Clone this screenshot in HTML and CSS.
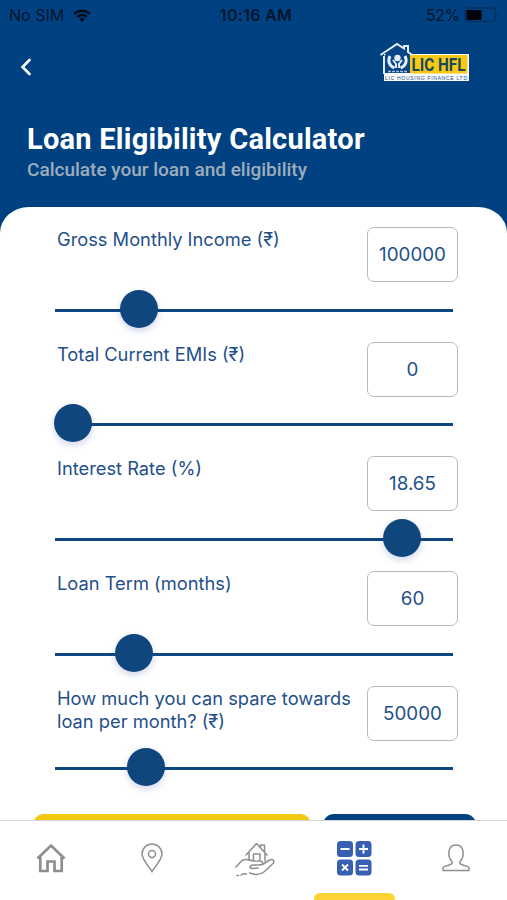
FILE: index.html
```html
<!DOCTYPE html>
<html lang="en">
  <head>
    <meta charset="UTF-8" />
    <meta name="viewport" content="width=device-width, initial-scale=1.0" />
    <title>Loan Eligibility Calculator</title>
    <link rel="stylesheet" href="styles.css" />
  </head>
  <body>
    <div class="status-bar">
      <div class="network">
        <span class="carrier">No SIM</span>
        <svg class="wifi" viewBox="0 0 18 13" width="18" height="13">
          <path d="M9 13 6.3 10.2a3.8 3.8 0 0 1 5.4 0z" fill="#030d1c" />
          <path d="M4.2 8a6.8 6.8 0 0 1 9.6 0M1.1 4.9a11.2 11.2 0 0 1 15.8 0" fill="none" stroke="#030d1c" stroke-width="2.5" />
        </svg>
      </div>
      <span class="clock">10:16 AM</span>
      <div class="power">
        <span class="percent">52%</span>
        <svg class="battery" viewBox="0 0 36 16" width="36" height="16">
          <rect x="1" y="1" width="30.500" height="13.500" rx="3.500" fill="none" stroke="#06305f" stroke-width="1.500" />
          <rect x="2.500" y="3" width="15" height="10" rx="1" fill="#000309" />
          <path d="M33.200 5.500c2.200.8 2.200 3.700 0 4.500z" fill="#06305f" />
        </svg>
      </div>
    </div>

    <header class="header">
      <div class="top-row">
        <svg class="back" viewBox="0 0 12 18" width="12" height="18">
          <path d="M9.500 2 2.500 9l7 7" />
        </svg>
        <svg class="logo" viewBox="0 0 90 40" width="90" height="40">
          <path d="M5 12h85v27H5z" fill="#f7fbff" />
          <path d="M5 14v17h26V10L18 2z" fill="#084586" />
          <path d="M5 32V14M1.500 13 18 2l7 4.500V4h4v6l5 3.500" fill="none" stroke="#e3eefa" stroke-width="2" />
          <path d="M31 13h57.500v18.500H31z" fill="#fac915" />
          <path d="M11 14c-2.500 5-1 9.500 4.500 12M26 14c2.500 5 1 9.500-4.500 12" fill="none" stroke="#e3eefa" stroke-width="3" />
          <path d="M14 18l3 4v4M23 18l-3 4v4" fill="none" stroke="#e3eefa" stroke-width="2" />
          <circle cx="18.500" cy="16" r="3.200" fill="#e3eefa" />
          <path d="M9 29.500h19" stroke="#9fbcda" stroke-width="1.500" stroke-dasharray="3 1" />
          <text class="logo-name" x="32.500" y="28.800" textLength="54" lengthAdjust="spacingAndGlyphs">LIC HFL</text>
          <text class="logo-sub" x="6" y="37.800" textLength="82">LIC HOUSING FINANCE LTD</text>
        </svg>
      </div>
      <h1>Loan Eligibility Calculator</h1>
      <p>Calculate your loan and eligibility</p>
    </header>

    <main class="sheet">
      <div class="field">
        <label for="income">Gross Monthly Income (₹)</label>
        <input id="income" class="amount" type="text" value="100000" />
        <input class="slider" type="range" min="0" max="100" step="0.1" value="18.2" />
      </div>
      <div class="field">
        <label for="emis">Total Current EMIs (₹)</label>
        <input id="emis" class="amount" type="text" value="0" />
        <input class="slider" type="range" min="0" max="100" step="0.1" value="0" />
      </div>
      <div class="field">
        <label for="rate">Interest Rate (%)</label>
        <input id="rate" class="amount" type="text" value="18.65" />
        <input class="slider" type="range" min="0" max="100" step="0.1" value="91" />
      </div>
      <div class="field">
        <label for="term">Loan Term (months)</label>
        <input id="term" class="amount" type="text" value="60" />
        <input class="slider" type="range" min="0" max="100" step="0.1" value="16.8" />
      </div>
      <div class="field">
        <label for="spare">How much you can spare towards loan per month? (₹)</label>
        <input id="spare" class="amount" type="text" value="50000" />
        <input class="slider" type="range" min="0" max="100" step="0.1" value="20.2" />
      </div>
      <div class="actions">
        <button class="btn yellow"></button>
        <button class="btn blue"></button>
      </div>
    </main>

    <nav class="tabs">
      <a class="tab">
        <svg viewBox="0 0 30 30" width="30" height="30">
          <path d="M1.500 15.500 15 2.500l13.500 13M4.300 14v14h7.200V18.500h7V28h7.200V14" fill="none" stroke="#8e8e8e" stroke-width="2.700" />
        </svg>
      </a>
      <a class="tab">
        <svg viewBox="0 0 24 30" width="24" height="30">
          <path d="M12 28.500C9 23.500 2 16.500 2 11a10 10 0 0 1 20 0c0 5.500-7 12.500-10 17.500z" fill="none" stroke="#8e8e8e" stroke-width="1.500" />
          <circle cx="12" cy="11" r="3.500" fill="none" stroke="#8e8e8e" stroke-width="1.500" />
        </svg>
      </a>
      <a class="tab">
        <svg class="hand" viewBox="0 0 40 36" width="40" height="36">
          <g fill="none" stroke="#8e8e8e" stroke-width="1.500" stroke-linecap="round" stroke-linejoin="round">
            <path d="M11 13 21.500 1.500 32 13M14 11v7M30 11v8M25.500 5V3h4v7M18.500 18v-6h6.500v6" />
            <path d="M1 25l6-6.500q4-1.500 8-.5 3 1.500 9 1 4 0 3.500 2.500-.5 1.500-4 1.500h-6q-2.500.5-2.500 2.500 1 1.500 8 .5" />
            <path d="M27.500 22.500l7-4.500q3-1 4 .5 1 2-1 3.500l-8 7.500q-4 3.500-9 3l-6-1.500M6 33q3-2 5.500-1M2 33.500h1.500" />
          </g>
        </svg>
      </a>
      <a class="tab active">
        <svg class="calc" viewBox="0 0 36 36" width="36" height="36">
          <g fill="#375fb2">
            <rect x="1" y="1" width="16" height="16" rx="3.500" />
            <rect x="19.500" y="1" width="16" height="16" rx="3.500" />
            <rect x="1" y="19.500" width="16" height="16" rx="3.500" />
            <rect x="19.500" y="19.500" width="16" height="16" rx="3.500" />
          </g>
          <path d="M4.500 9h9M23 9h9M27.500 4.500v9M6 24.500l6 6M12 24.500l-6 6M23 25.800h9M23 29.500h9" stroke="#fff" stroke-width="1.800" />
        </svg>
      </a>
      <a class="tab">
        <svg viewBox="0 0 30 30" width="30" height="30">
          <path d="M11 18.500C6.500 14 6 2 15 2s8.500 12 4 16.500c-1 2.500 1.500 3 4.500 4 4 1.200 5 2 4.500 5H2c-.5-3 .5-3.800 4.500-5 3-1 5.500-1.500 4.500-4z" fill="none" stroke="#8e8e8e" stroke-width="1.500" stroke-linejoin="round" />
        </svg>
      </a>
    </nav>
  </body>
</html>
```
FILE: styles.css
```css
* {
  box-sizing: border-box;
}
body {
  margin: 0;
  height: 900px;
  display: flex;
  flex-direction: column;
  overflow: hidden;
  background-color: #004281;
  font-family: Inter, sans-serif;
}
.status-bar {
  display: grid;
  grid-template-columns: 1fr auto 1fr;
  align-items: center;
  height: 30px;
  padding: 0 7px 0 9px;
  font-size: 16px;
  color: #03152e;
}
.network,
.power {
  display: flex;
  align-items: center;
  gap: 9px;
}
.power {
  justify-content: flex-end;
  gap: 4px;
}
.percent {
  font-size: 15.5px;
}
.clock {
  padding-left: 3px;
  font-weight: 600;
  letter-spacing: 0.3px;
}
.header {
  height: 177px;
  padding: 12px 38px 0 27px;
  font-family: Roboto, sans-serif;
}
.top-row {
  display: flex;
  justify-content: space-between;
  align-items: center;
  height: 40px;
  margin-left: -7px;
}
.back {
  margin-top: 10px;
  fill: none;
  stroke: #fff;
  stroke-width: 2.6;
  stroke-linecap: round;
}
.logo-name {
  font-family: Roboto, sans-serif;
  font-size: 18.5px;
  font-weight: 700;
  fill: #15495e;
}
.logo-sub {
  font-family: "Liberation Sans", sans-serif;
  font-size: 5px;
  fill: #1d4d80;
}
h1 {
  margin: 39px 0 0;
  font-size: 29px;
  line-height: 36px;
  font-weight: 700;
  letter-spacing: 0.25px;
  color: #fff;
}
.header p {
  margin: 1px 0 0;
  font-size: 19px;
  line-height: 24px;
  font-weight: 500;
  color: #9eacbc;
}
.sheet {
  flex: 1;
  min-height: 0;
  overflow: hidden;
  padding: 20px 49px 0 54px;
  border-radius: 29px 29px 0 0 / 26px 26px 0 0;
  background-color: #fff;
}
.field {
  display: grid;
  grid-template-columns: 313px 91px;
  grid-template-rows: 55px 38px;
  row-gap: 7.5px;
  align-items: start;
  height: 114.7px;
}
label {
  padding: 1px 10px 0 3px;
  font-size: 18.3px;
  line-height: 23px;
  color: #1f508a;
}
.amount {
  width: 91px;
  height: 55px;
  padding: 0;
  border: 1px solid #b9b9b9;
  border-radius: 7px;
  background-color: #fff;
  font-family: Inter, sans-serif;
  font-size: 18.8px;
  text-align: center;
  color: #1f508a;
}
.slider {
  grid-column: 1 / 3;
  appearance: none;
  width: 400px;
  height: 38px;
  margin: 0;
  background: linear-gradient(#10467e, #10467e) 1px 19px / 398px 3px no-repeat;
}
.slider::-webkit-slider-thumb {
  appearance: none;
  width: 38px;
  height: 38px;
  border-radius: 50%;
  background-color: #10467e;
  box-shadow: 0 3px 7px rgba(30, 70, 150, 0.22);
}
.actions {
  display: flex;
  gap: 12px;
  margin: 14px -18px 0 -21px;
}
.btn {
  height: 50px;
  border: none;
  border-radius: 11px;
}
.btn.yellow {
  width: 278px;
  background-color: #f3c810;
}
.btn.blue {
  width: 153px;
  background-color: #004281;
}
.tabs {
  display: grid;
  grid-template-columns: repeat(5, 1fr);
  height: 80px;
  border-top: 1px solid #d4d4d4;
  background-color: #fff;
}
.tab {
  display: flex;
  justify-content: center;
  align-items: center;
  padding-bottom: 6px;
}
.hand {
  margin: 4px 0 0 3px;
}
.calc {
  margin-right: 2px;
}
.tab.active {
  position: relative;
}
.tab.active::after {
  content: "";
  position: absolute;
  bottom: 0;
  width: 81px;
  height: 7px;
  border-radius: 6px 6px 0 0;
  background-color: #fdd235;
}
```
